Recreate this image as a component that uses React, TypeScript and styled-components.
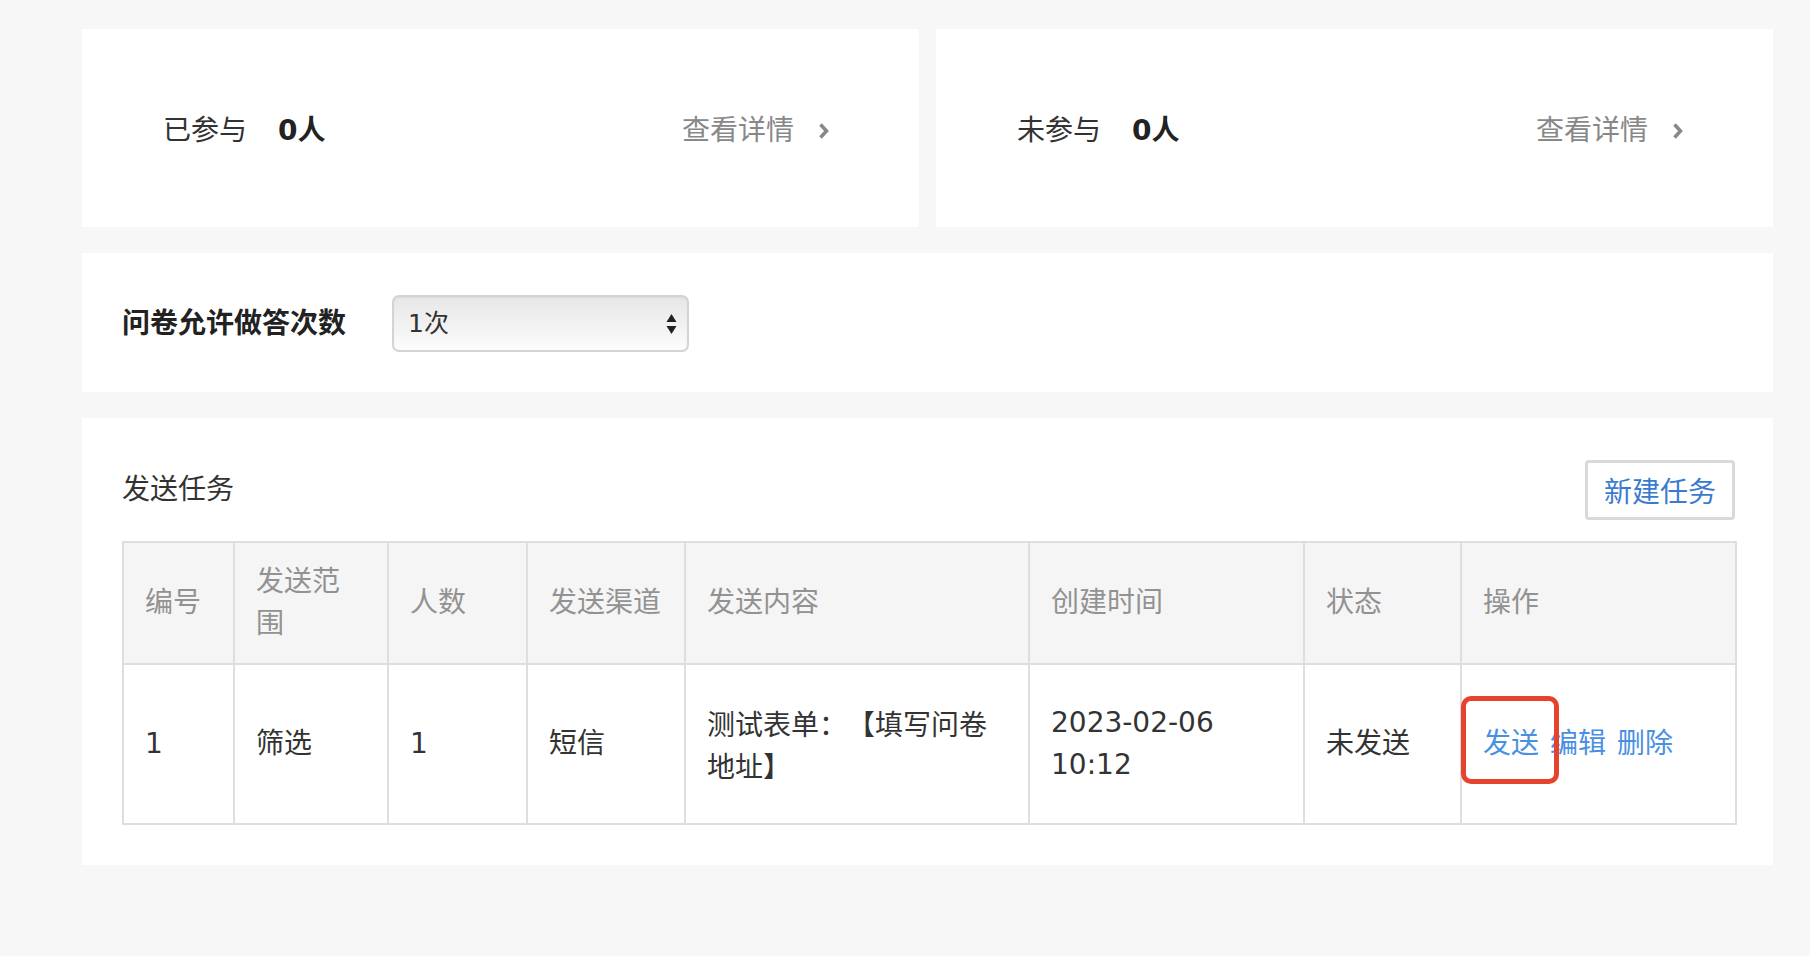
import React from 'react';
import styled, { createGlobalStyle } from 'styled-components';

const Global = createGlobalStyle`
  html, body { margin: 0; padding: 0; background: #f7f7f7; }
  body {
    font-family: "DejaVu Sans", "Noto Sans CJK SC", sans-serif;
    color: #333;
    text-spacing-trim: space-all;
  }
  * { box-sizing: border-box; }
`;

const Page = styled.div`
  min-height: 956px;
  padding: 29px 37px 40px 82px;
  display: flex;
  flex-direction: column;
  gap: 26px;
`;

const StatsRow = styled.div`
  display: grid;
  grid-template-columns: 1fr 1fr;
  gap: 17px;
`;

const StatCard = styled.div`
  height: 198px;
  background: #fff;
  padding: 6px 90px 0 81px;
  display: flex;
  align-items: center;
  justify-content: space-between;
`;

const Stat = styled.div`
  display: flex;
  align-items: center;
  font-size: 28px;
  line-height: 40px;
`;

const StatLabel = styled.span`
  color: #333;
`;

const StatValue = styled.span`
  margin-left: 31px;
  font-weight: bold;
  color: #222;
`;

const DetailLink = styled.a`
  display: flex;
  align-items: center;
  gap: 24px;
  font-size: 28px;
  line-height: 40px;
  color: #888;
  text-decoration: none;
  cursor: pointer;
`;

const Panel = styled.section`
  background: #fff;
`;

const SettingPanel = styled(Panel)`
  height: 139px;
  padding: 2px 40px 0;
  display: flex;
  align-items: center;
  gap: 46px;
`;

const SettingLabel = styled.span`
  font-size: 28px;
  font-weight: bold;
  color: #222;
  line-height: 40px;
`;

const SelectWrap = styled.div`
  position: relative;
  width: 297px;
  height: 57px;
`;

const Select = styled.select`
  appearance: none;
  -webkit-appearance: none;
  width: 100%;
  height: 100%;
  border: 2px solid #d4d4d4;
  border-radius: 7px;
  background: linear-gradient(#e7e7e7, #f3f3f3 60%, #fdfdfd);
  box-shadow: inset 0 1px 2px rgba(0, 0, 0, 0.06);
  font-family: inherit;
  font-size: 25px;
  color: #333;
  padding: 0 40px 0 14px;
  outline: none;
`;

const SelectArrows = styled.svg`
  position: absolute;
  right: 12px;
  top: 50%;
  transform: translateY(-50%);
  pointer-events: none;
`;

const TaskPanel = styled(Panel)`
  padding: 42px 38px 40px 40px;
`;

const TitleRow = styled.div`
  display: flex;
  align-items: center;
  justify-content: space-between;
  margin-bottom: 21px;
`;

const Title = styled.h2`
  margin: 0;
  font-size: 28px;
  font-weight: normal;
  color: #333;
  line-height: 40px;
`;

const NewButton = styled.button`
  width: 150px;
  height: 60px;
  border: 3px solid #d9d9d9;
  border-radius: 4px;
  background: #fff;
  color: #3a7bd0;
  font-family: inherit;
  font-size: 28px;
  padding: 0;
  cursor: pointer;
`;

const Table = styled.table`
  width: 100%;
  border-collapse: collapse;
  table-layout: fixed;
  font-size: 28px;
`;

const Th = styled.th`
  background: #f5f5f5;
  color: #929292;
  font-weight: normal;
  text-align: left;
  padding: 18px 21px;
  line-height: 42px;
  border: 2px solid #dedede;
  vertical-align: middle;
`;

const Td = styled.td<{ $cjk?: boolean }>`
  color: #333;
  padding: 37px 21px;
  line-height: 42px;
  border: 2px solid #dedede;
  vertical-align: middle;
  font-family: ${(p) =>
    p.$cjk ? '"Noto Sans CJK SC", sans-serif' : 'inherit'};
`;

const ActionLink = styled.a`
  color: #4a90e2;
  cursor: pointer;
  margin-right: 11px;
  text-decoration: none;
`;

const Highlight = styled.span`
  position: relative;
  display: inline-block;
`;

const RedBox = styled.span`
  position: absolute;
  left: -22px;
  top: -27px;
  width: 98px;
  height: 88px;
  border: 5px solid #e5432d;
  border-radius: 10px;
  pointer-events: none;
`;

const Chevron = () => (
  <svg width="11" height="18" viewBox="0 0 11 18">
    <polyline points="2.5,2.5 8.5,9 2.5,15.5" fill="none" stroke="#888" strokeWidth="3.5" />
  </svg>
);

const columns = [
  { title: '编号', width: 111 },
  { title: '发送范围', width: 154 },
  { title: '人数', width: 139 },
  { title: '发送渠道', width: 158 },
  { title: '发送内容', width: 344 },
  { title: '创建时间', width: 275 },
  { title: '状态', width: 157 },
  { title: '操作', width: 275 },
];

export default function App() {
  return (
    <>
      <Global />
      <Page>
        <StatsRow>
          <StatCard>
            <Stat>
              <StatLabel>已参与</StatLabel>
              <StatValue>0人</StatValue>
            </Stat>
            <DetailLink>
              查看详情
              <Chevron />
            </DetailLink>
          </StatCard>
          <StatCard>
            <Stat>
              <StatLabel>未参与</StatLabel>
              <StatValue>0人</StatValue>
            </Stat>
            <DetailLink>
              查看详情
              <Chevron />
            </DetailLink>
          </StatCard>
        </StatsRow>

        <SettingPanel>
          <SettingLabel>问卷允许做答次数</SettingLabel>
          <SelectWrap>
            <Select defaultValue="1">
              <option value="1">1次</option>
              <option value="2">2次</option>
              <option value="3">3次</option>
            </Select>
            <SelectArrows width="11" height="22" viewBox="0 0 11 22">
              <polygon points="5.5,1 10.5,9 0.5,9" fill="#222" />
              <polygon points="0.5,13 10.5,13 5.5,21" fill="#222" />
            </SelectArrows>
          </SelectWrap>
        </SettingPanel>

        <TaskPanel>
          <TitleRow>
            <Title>发送任务</Title>
            <NewButton>新建任务</NewButton>
          </TitleRow>
          <Table>
            <colgroup>
              {columns.map((c) => (
                <col key={c.title} style={{ width: c.width }} />
              ))}
            </colgroup>
            <thead>
              <tr>
                {columns.map((c) => (
                  <Th key={c.title}>{c.title}</Th>
                ))}
              </tr>
            </thead>
            <tbody>
              <tr>
                <Td>1</Td>
                <Td>筛选</Td>
                <Td>1</Td>
                <Td>短信</Td>
                <Td $cjk>测试表单：【填写问卷地址】</Td>
                <Td>2023-02-06 10:12</Td>
                <Td>未发送</Td>
                <Td>
                  <Highlight>
                    <ActionLink>发送</ActionLink>
                    <RedBox />
                  </Highlight>
                  <ActionLink>编辑</ActionLink>
                  <ActionLink>删除</ActionLink>
                </Td>
              </tr>
            </tbody>
          </Table>
        </TaskPanel>
      </Page>
    </>
  );
}
